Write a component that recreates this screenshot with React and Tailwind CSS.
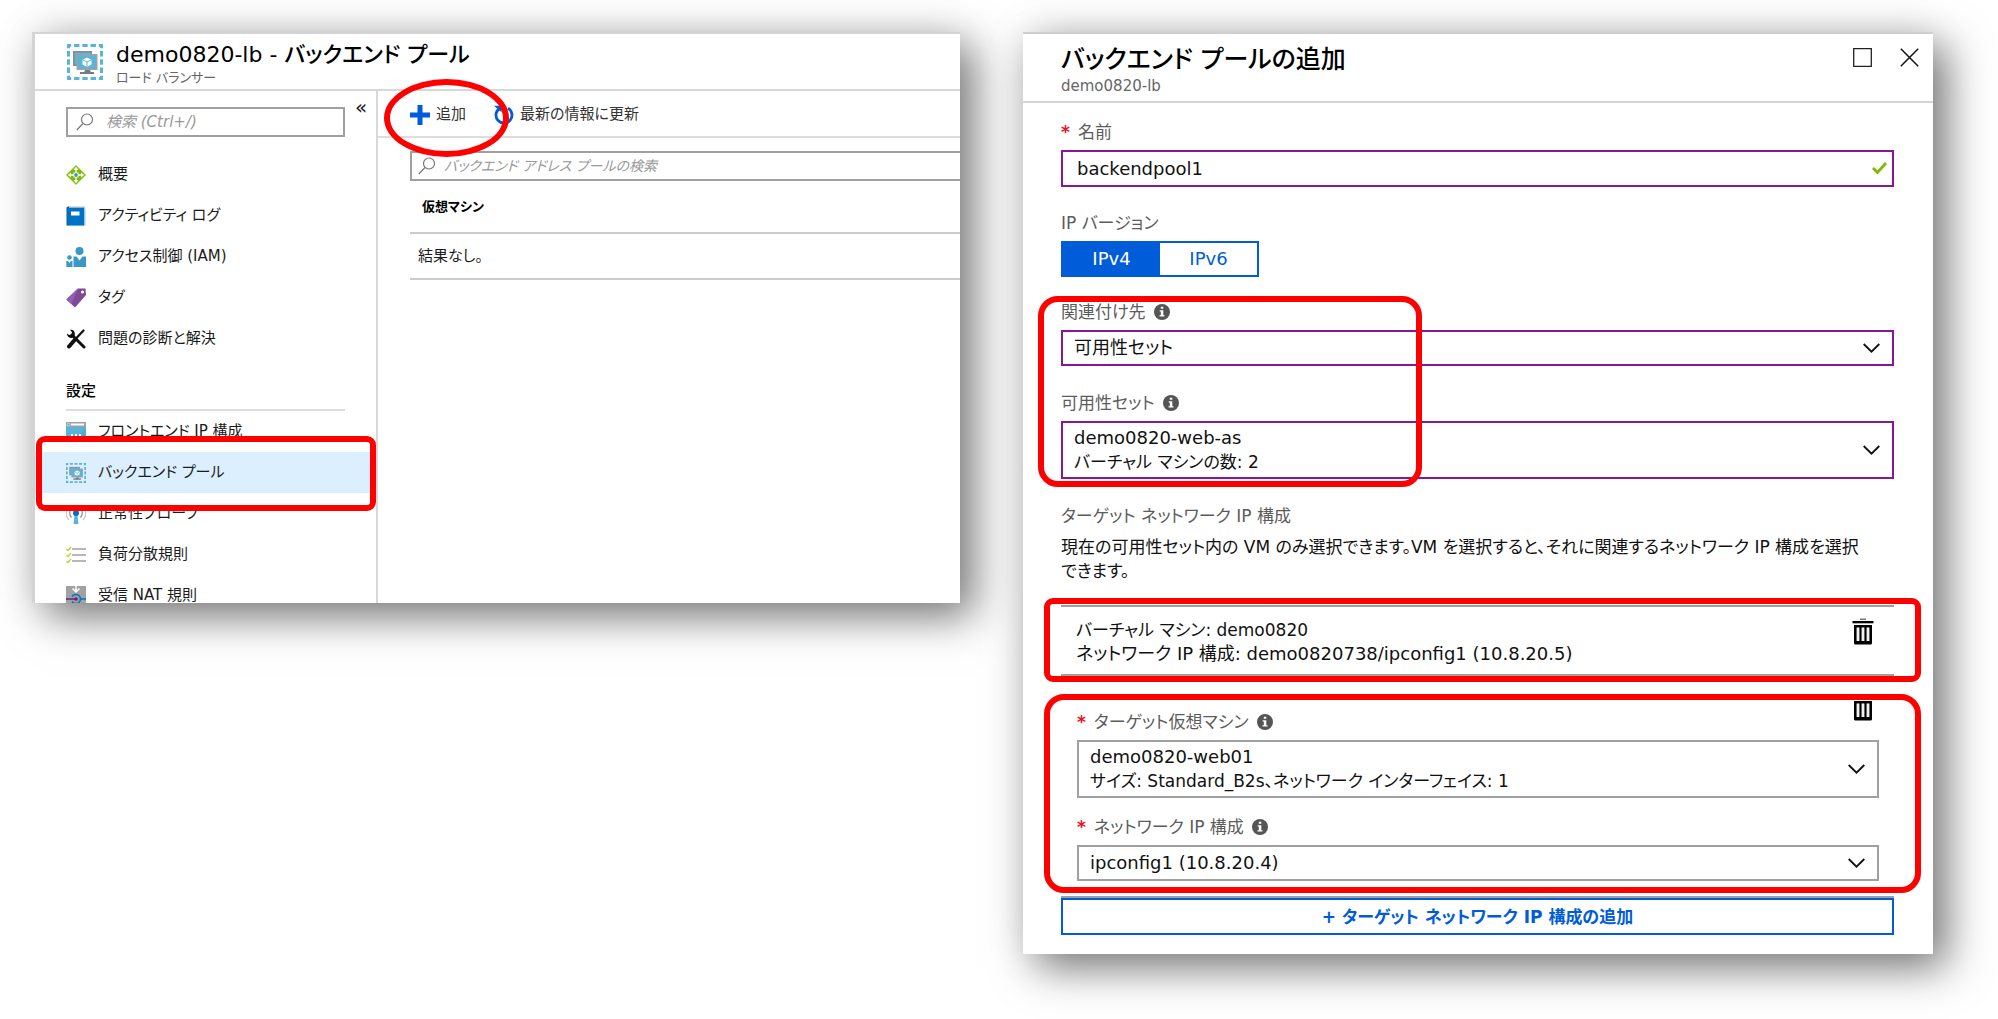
import React from "react";

const RED = "pointer-events-none absolute z-10 border-[6px] border-[#ff0000]";

function PoolIcon({ className }) {
  return (
    <svg viewBox="0 0 36 36" className={className} aria-hidden="true">
      <rect x="1.5" y="1.5" width="33" height="33" fill="none" stroke="#59b4d9" strokeWidth="3" strokeDasharray="5.4 2.85" strokeDashoffset="2.7" />
      <path d="M6 7h19v15H6z" fill="#8a8a8a" />
      <path d="M7.500 8.500h16v12h-16z" fill="#59b4d9" />
      <path d="M9.500 10h21v16h-21z" fill="#a0a1a2" />
      <path d="M11 11.500h18v13H11z" fill="#59b4d9" />
      <path d="M18 26h5l1 2.500h-7zM13 28h14v2H13z" fill="#7a7a7a" />
      <path d="M20 13.500l4.500 2.200v4.800L20 23l-4.500-2.500v-4.800z" fill="#fff" />
      <path d="M15.500 15.700L20 18l4.500-2.300M20 18v5" fill="none" stroke="#59b4d9" strokeWidth="1" />
    </svg>
  );
}

function OverviewIcon() {
  return (
    <svg viewBox="0 0 20 20" className="h-5 w-5" aria-hidden="true">
      <path d="M10 .4L19.600 10 10 19.600.4 10z" fill="#7fba00" stroke="#7fba00" strokeWidth=".6" strokeLinejoin="round" />
      <path d="M10 1.800l2.600 3.200h-5.200zM10 18.200l2.600-3.200h-5.200zM1.800 10L5 7.400v5.200zM18.200 10L15 7.400v5.200z" fill="#fff" />
      <path d="M10 4v12M4 10h12" stroke="#fff" strokeWidth="1.300" />
      <path d="M7.300 7.300l5.400 5.400M12.700 7.300l-5.400 5.400" stroke="#b8d432" strokeWidth="1" />
      <circle cx="10" cy="10" r="2.800" fill="#fff" />
      <circle cx="10" cy="10" r="1.900" fill="#3999c6" />
    </svg>
  );
}

function LogIcon() {
  return (
    <svg viewBox="0 0 20 20" className="h-5 w-5" aria-hidden="true">
      <path d="M2 .5h17v3H2z" fill="#b8c4cc" />
      <path d="M3 2.500h16.500v17H3z" fill="#9cc3e0" />
      <path d="M.5 1.500L2 .5h1v19H.5z" fill="#1a5a99" />
      <path d="M1.500 1.800H18v17.700H1.500z" fill="#0072c6" />
      <path d="M5 5.500h8.500v4H5z" fill="#fff" />
    </svg>
  );
}

function AccessIcon() {
  return (
    <svg viewBox="0 0 20 20" className="h-5 w-5" aria-hidden="true">
      <circle cx="13.500" cy="4" r="4" fill="#3999c6" />
      <path d="M7.500 9.500h3l3 4 3-4H20V20H7.500z" fill="#3999c6" />
      <circle cx="3.500" cy="10.500" r="2.300" fill="#3999c6" />
      <path d="M.3 14h1.700l1.500 2L5 14h1.500v6H.3z" fill="#3999c6" />
    </svg>
  );
}

function TagIcon() {
  return (
    <svg viewBox="0 0 20 20" className="h-5 w-5" aria-hidden="true">
      <path d="M12 .5L19.500.5 20 7 9 19.500.3 11.500z" fill="#804998" />
      <path d="M12 .5L5.500 16.200.3 11.500z" fill="#925fae" />
      <circle cx="16.500" cy="4" r="1.600" fill="#fff" />
    </svg>
  );
}

function ToolsIcon() {
  return (
    <svg viewBox="0 0 20 20" className="h-5 w-5" aria-hidden="true">
      <path d="M17.500 1.500L10 9.500" stroke="#111" strokeWidth="2.200" strokeLinecap="round" />
      <path d="M9.500 10L3 17.500" stroke="#111" strokeWidth="4" strokeLinecap="round" />
      <path d="M6 6l12 12" stroke="#111" strokeWidth="3" strokeLinecap="round" />
      <path d="M1 4.500A4.200 4.200 0 0 0 5.500 9 4.200 4.200 0 0 0 8.800 4.200 4.200 4.200 0 0 0 4 .8L6 3.200 5.300 5.500 3 6z" fill="#111" />
    </svg>
  );
}

function FrontendIcon() {
  return (
    <svg viewBox="0 0 20 20" className="h-5 w-5" aria-hidden="true">
      <path d="M0 0h20v20H0z" fill="#59b4d9" />
      <path d="M0 0h20v5H0z" fill="#a0a1a2" />
      <path d="M5 1.500h13v2H5z" fill="#fff" />
      <circle cx="2.500" cy="2.500" r="1.400" fill="#59b4d9" stroke="#fff" strokeWidth=".5" />
      <path d="M20 5v15H6z" fill="#3e9ac4" opacity=".35" />
      <path d="M5 12h2v2H5zM9 12h2v2H9zM13 12h2v2h-2z" fill="#fff" />
    </svg>
  );
}

function ProbeIcon() {
  return (
    <svg viewBox="0 0 20 20" className="h-5 w-5" aria-hidden="true">
      <path d="M8.500 11h3L12.500 20h-5z" fill="#59b4d9" />
      <circle cx="10" cy="9" r="3" fill="#0072c6" />
      <path d="M5.500 13.500a6.500 6.500 0 0 1 0-9M14.500 13.500a6.500 6.500 0 0 0 0-9" fill="none" stroke="#8a8c8e" strokeWidth="1.200" />
      <path d="M3 16a10 10 0 0 1 0-14M17 16a10 10 0 0 0 0-14" fill="none" stroke="#c4c6c8" strokeWidth="1.200" />
    </svg>
  );
}

function RulesIcon() {
  return (
    <svg viewBox="0 0 20 20" className="h-5 w-5" aria-hidden="true">
      <path d="M6 4h14M6 10h14M6 16h14" stroke="#a0a1a2" strokeWidth="1.300" />
      <path d="M.5 4l1.500 1.500L5 2M.5 10l1.500 1.500L5 8M.5 16l1.500 1.500L5 14" fill="none" stroke="#b8d432" strokeWidth="1.300" />
    </svg>
  );
}

function NatIcon() {
  return (
    <svg viewBox="0 0 20 20" className="h-5 w-5" aria-hidden="true">
      <path d="M0 0h20v20H0z" fill="#a0a1a2" />
      <path d="M10 0v5M6.500 2.500L10 6l3.500-3.500" fill="none" stroke="#fff" strokeWidth="1.500" />
      <path d="M0 13h10" stroke="#68217a" strokeWidth="1.500" />
      <path d="M6 10.500a4.600 4.600 0 1 1 0 5" fill="none" stroke="#0072c6" strokeWidth="1.500" />
      <path d="M14 13h6" stroke="#0072c6" strokeWidth="1.500" />
      <circle cx="10" cy="13" r="1.800" fill="#68217a" />
    </svg>
  );
}

function SearchIcon() {
  return (
    <svg viewBox="0 0 18 18" className="h-[18px] w-[18px] shrink-0" fill="none" stroke="#777" strokeWidth="1.200" aria-hidden="true">
      <circle cx="11" cy="6.500" r="5.500" />
      <path d="M7 10.500L.8 17" />
    </svg>
  );
}

function TrashIcon() {
  return (
    <svg viewBox="0 0 22 27" className="h-[27px] w-[22px]" aria-hidden="true">
      <path d="M8 .5h6v1.500H8z" fill="#777" />
      <path d="M.5 3h21v2.300H.5z" fill="#000" />
      <path d="M2 7h18v18a1.500 1.500 0 0 1-1.500 1.500h-15A1.500 1.500 0 0 1 2 25z" fill="#000" />
      <path d="M6 9.500v13.500M11 9.500v13.500M16 9.500v13.500" stroke="#fff" strokeWidth="2.800" />
      <path d="M6 9.500v13.500M11 9.500v13.500M16 9.500v13.500" stroke="#bbb" strokeWidth=".4" />
    </svg>
  );
}

function InfoIcon() {
  return (
    <svg viewBox="0 0 16 16" className="h-4 w-4" aria-hidden="true">
      <circle cx="8" cy="8" r="8" fill="#555" />
      <path d="M6.800 2.800h2.500v2H6.800zM5.700 6.300h3.600v5h1.200v1.300H5.500v-1.300h1.300V7.600H5.700z" fill="#fff" />
    </svg>
  );
}

function Chevron() {
  return (
    <svg viewBox="0 0 17 10" className="h-[10px] w-[17px] shrink-0" fill="none" stroke="#111" strokeWidth="1.800" aria-hidden="true">
      <path d="M.7 1l7.800 7.700L16.300 1" />
    </svg>
  );
}

function NavItem({ icon, children, active }) {
  return (
    <li className={active ? "relative bg-[#dceffe]" : ""}>
      <a href="#" className="flex h-[41px] items-center gap-3 pl-[31px] text-[#1b1b1b]">
        {icon}
        <span>{children}</span>
      </a>
      {active && <span className={RED + " -top-4 -bottom-[18px] left-px right-0 rounded-[9px]"} />}
    </li>
  );
}

function Label({ required, info, htmlFor, children }) {
  return (
    <div className="flex h-6 items-center gap-2 text-[17px] text-[#5c5c5c]">
      <label htmlFor={htmlFor} className="flex items-center gap-2">
        {required && <span className="font-bold text-[#e81123]">*</span>}
        {children}
      </label>
      {info && <InfoIcon />}
    </div>
  );
}

function SelectBox({ id, value, purple }) {
  return (
    <div className={"relative mt-1.5 flex h-9 border-2 " + (purple ? "border-[#881798]" : "border-[#a0a0a0]")}>
      <select id={id} defaultValue={value} className="w-full appearance-none bg-transparent pl-[11px] pr-10 outline-none">
        <option>{value}</option>
      </select>
      <span className="pointer-events-none absolute inset-y-0 right-3 flex items-center">
        <Chevron />
      </span>
    </div>
  );
}

function PickerBox({ id, title, detail, purple }) {
  return (
    <button
      id={id}
      type="button"
      aria-haspopup="listbox"
      className={"mt-1.5 flex h-[58px] w-full items-center justify-between border-2 pl-[11px] pr-3 text-left leading-6 " + (purple ? "border-[#881798]" : "border-[#a0a0a0]")}
    >
      <span>
        <span className="block">{title}</span>
        <span className="block text-[17px]">{detail}</span>
      </span>
      <Chevron />
    </button>
  );
}

function ListPanel() {
  return (
    <section className="h-[571px] min-w-0 flex-[925] overflow-hidden border-l-[3px] border-t-2 border-[#d4d4d4] bg-white text-[15px] shadow-[14px_14px_40px_rgba(0,0,0,0.5),0_0_40px_rgba(0,0,0,0.1)]">
      <header className="flex h-[57px] items-start gap-[13px] border-b-2 border-[#d8d8d8] pl-8 pt-2.5">
        <PoolIcon className="h-9 w-9" />
        <div className="-mt-1">
          <h1 className="text-[22px] font-medium leading-[30px] text-black">demo0820-lb - バックエンド プール</h1>
          <p className="text-[13px] leading-4 text-[#666]">ロード バランサー</p>
        </div>
      </header>
      <div className="flex h-full">
        <nav className="h-full w-[343px] shrink-0 border-r-2 border-[#d8d8d8]">
          <div className="flex items-start gap-2.5 pl-[31px] pt-4">
            <div className="flex h-[30px] w-[279px] items-center gap-3 border-2 border-[#a0a0a0] pl-2">
              <SearchIcon />
              <input aria-label="検索" placeholder="検索 (Ctrl+/)" className="w-full min-w-0 italic outline-none placeholder:text-[#999]" />
            </div>
            <button type="button" aria-label="折りたたむ" className="-mt-3 text-xl leading-6 text-[#222]">«</button>
          </div>
          <ul className="mt-[17px]">
            <NavItem icon={<OverviewIcon />}>概要</NavItem>
            <NavItem icon={<LogIcon />}>アクティビティ ログ</NavItem>
            <NavItem icon={<AccessIcon />}>アクセス制御 (IAM)</NavItem>
            <NavItem icon={<TagIcon />}>タグ</NavItem>
            <NavItem icon={<ToolsIcon />}>問題の診断と解決</NavItem>
          </ul>
          <h2 className="ml-[31px] mt-5 w-[279px] border-b-2 border-[#ddd] pb-1.5 font-medium leading-6 text-black">設定</h2>
          <ul>
            <NavItem icon={<FrontendIcon />}>フロントエンド IP 構成</NavItem>
            <NavItem active icon={<PoolIcon className="h-5 w-5" />}>バックエンド プール</NavItem>
            <NavItem icon={<ProbeIcon />}>正常性プローブ</NavItem>
            <NavItem icon={<RulesIcon />}>負荷分散規則</NavItem>
            <NavItem icon={<NatIcon />}>受信 NAT 規則</NavItem>
          </ul>
        </nav>
        <div className="min-w-0 flex-1">
          <div className="flex h-[47px] items-center gap-7 border-b-2 border-[#ddd] pl-8 pt-0.5 text-[#333]">
            <button type="button" className="relative flex items-center gap-1.5">
              <svg viewBox="0 0 20 20" className="h-5 w-5" aria-hidden="true">
                <path d="M7.500 0h5v7.500H20v5h-7.500V20h-5v-7.500H0v-5h7.500z" fill="#015cda" />
              </svg>
              追加
              <span className={RED + " -left-[26px] -top-[24px] h-[78px] w-[125px] rounded-[50%]"} />
            </button>
            <button type="button" className="flex items-center gap-1.5">
              <svg viewBox="0 0 20 20" className="h-5 w-5" fill="none" stroke="#015cda" strokeWidth="2.800" aria-hidden="true">
                <path d="M14 3.200A8 8 0 1 1 5.500 3.500" />
                <path d="M0 .8h7.500v6.500z" fill="#015cda" stroke="none" />
              </svg>
              最新の情報に更新
            </button>
          </div>
          <div className="pl-8">
            <div className="mt-[13px] flex h-[30px] items-center gap-2 border-2 border-r-0 border-[#a0a0a0] pl-1.5">
              <SearchIcon />
              <input aria-label="バックエンド アドレス プールの検索" placeholder="バックエンド アドレス プールの検索" className="w-full text-sm italic outline-none placeholder:text-[#999]" />
            </div>
            <table className="w-full border-collapse text-left">
              <thead>
                <tr className="h-[52px] border-b-2 border-[#ccc]">
                  <th className="pl-3 text-[13px] font-bold text-black">仮想マシン</th>
                </tr>
              </thead>
              <tbody>
                <tr className="h-[46px] border-b-2 border-[#ccc]">
                  <td className="pl-2 text-[#1b1b1b]">結果なし。</td>
                </tr>
              </tbody>
            </table>
          </div>
        </div>
      </div>
    </section>
  );
}

function AddPanel() {
  return (
    <section className="min-w-0 flex-[910] border-t-2 border-[#d0d0d0] bg-white pb-[19px] text-lg leading-6 text-[#111] shadow-[14px_14px_40px_rgba(0,0,0,0.5),0_0_40px_rgba(0,0,0,0.1)]">
      <header className="flex h-[69px] items-start justify-between border-b-2 border-[#d4d4d4] pl-[38px] pr-3.5 pt-2">
        <div>
          <h1 className="text-[25px] font-medium leading-9 text-black">バックエンド プールの追加</h1>
          <p className="text-[15px] leading-4 text-[#666]">demo0820-lb</p>
        </div>
        <div className="flex gap-7 pt-1.5">
          <button type="button" aria-label="最大化">
            <svg viewBox="0 0 19 19" className="h-[19px] w-[19px]" fill="none" stroke="#222" strokeWidth="1.300" aria-hidden="true">
              <path d="M.7.7h17.600v17.600H.7z" />
            </svg>
          </button>
          <button type="button" aria-label="閉じる">
            <svg viewBox="0 0 19 19" className="h-[19px] w-[19px]" fill="none" stroke="#111" strokeWidth="1.500" aria-hidden="true">
              <path d="M.8.8l17.400 17.400M18.200.8L.8 18.200" />
            </svg>
          </button>
        </div>
      </header>
      <form className="pl-[38px] pr-[39px] pt-[17px]">
        <Label required htmlFor="pool-name">名前</Label>
        <div className="mt-1.5 flex h-[37px] items-center border-2 border-[#881798] pl-3.5 pr-[5px]">
          <input id="pool-name" defaultValue="backendpool1" className="min-w-0 flex-1 outline-none" />
          <svg viewBox="0 0 15 13" className="h-[13px] w-[15px]" fill="none" stroke="#7fba00" strokeWidth="2.800" aria-hidden="true">
            <path d="M1 6l4.500 4.500L14 1" />
          </svg>
        </div>
        <div className="mt-6">
          <Label>IP バージョン</Label>
          <div className="mt-1.5 flex h-9 w-[198px] border-2 border-[#015cda]">
            <button type="button" aria-pressed="true" className="flex-1 bg-[#015cda] text-white">IPv4</button>
            <button type="button" aria-pressed="false" className="flex-1 text-[#015cda]">IPv6</button>
          </div>
        </div>
        <div className="relative mt-[23px]">
          <Label info htmlFor="assoc">関連付け先</Label>
          <SelectBox id="assoc" purple value="可用性セット" />
          <div className="mt-[25px]">
            <Label info htmlFor="aset">可用性セット</Label>
            <PickerBox id="aset" purple title="demo0820-web-as" detail="バーチャル マシンの数: 2" />
          </div>
          <span className={RED + " -bottom-2 -left-[23px] -top-1 w-[384px] rounded-[20px]"} />
        </div>
        <div className="mt-[25px] text-[17px] text-[#5c5c5c]">ターゲット ネットワーク IP 構成</div>
        <p className="mt-[7px] text-[17px]">
          現在の可用性セット内の VM のみ選択できます。VM を選択すると、それに関連するネットワーク IP 構成を選択<br />できます。
        </p>
        <div className="relative mt-[22px] flex justify-between border-y-2 border-[#a0a0a0] pb-2 pl-[15px] pr-5 pt-[11px]">
          <div>
            <p className="text-[17px]">バーチャル マシン: demo0820</p>
            <p>ネットワーク IP 構成: demo0820738/ipconfig1 (10.8.20.5)</p>
          </div>
          <button type="button" aria-label="削除" className="self-start">
            <TrashIcon />
          </button>
          <span className={RED + " -bottom-2 -left-[17px] -right-[27px] -top-[9px] rounded-[9px]"} />
        </div>
        <div className="relative border-b-2 border-[#a0a0a0] pb-[15px] pl-4 pr-[15px] pt-[34px]">
          <Label required info htmlFor="vm">ターゲット仮想マシン</Label>
          <PickerBox id="vm" title="demo0820-web01" detail="サイズ: Standard_B2s、ネットワーク インターフェイス: 1" />
          <div className="mt-[17px]">
            <Label required info htmlFor="ipc">ネットワーク IP 構成</Label>
            <SelectBox id="ipc" value="ipconfig1 (10.8.20.4)" />
          </div>
          <button type="button" aria-label="削除" className="absolute right-5 top-[18px]">
            <TrashIcon />
          </button>
          <span className={RED + " -left-[17px] -right-[27px] bottom-[3px] top-[18px] rounded-[20px]"} />
        </div>
        <button type="button" className="block h-[37px] w-full border-2 border-[#015cda] text-[17px] font-bold text-[#015cda]">
          + ターゲット ネットワーク IP 構成の追加
        </button>
      </form>
    </section>
  );
}

export default function App() {
  return (
    <main lang="ja" className="flex min-h-screen items-start gap-[63px] bg-white pb-16 pl-8 pr-[65px] pt-8 font-['DejaVu_Sans','Noto_Sans_CJK_JP',sans-serif] [font-feature-settings:'palt']">
      <ListPanel />
      <AddPanel />
    </main>
  );
}
